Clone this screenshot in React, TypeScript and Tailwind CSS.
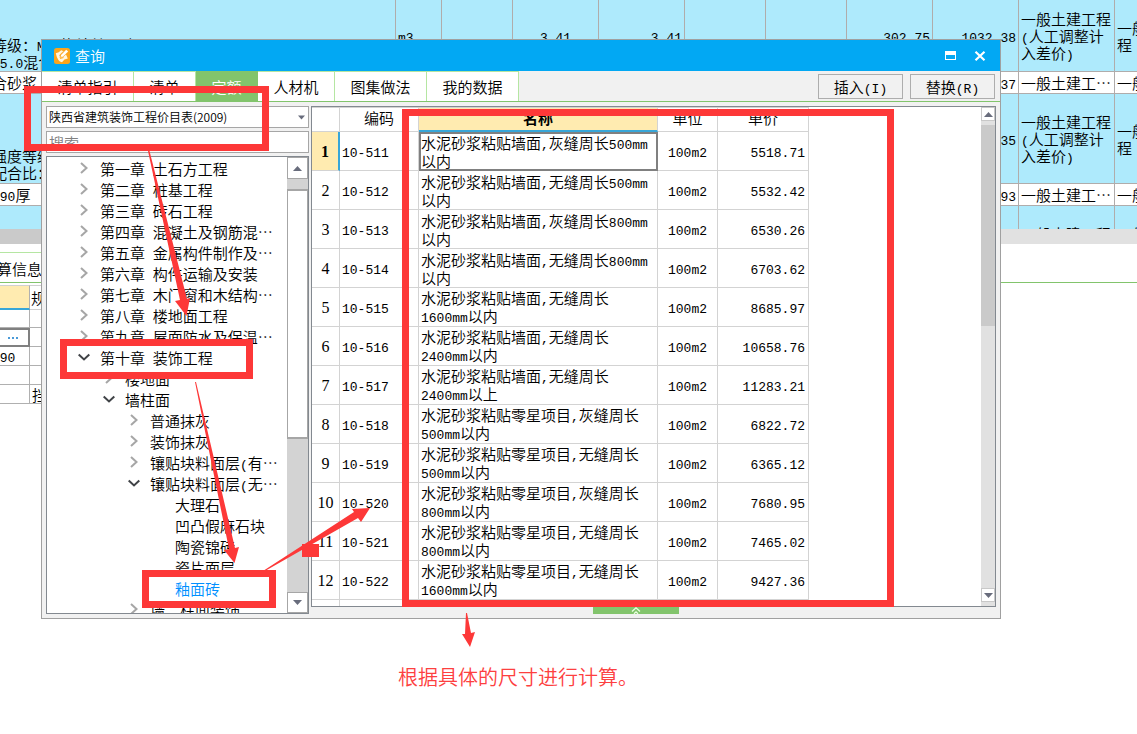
import React from "react";

const RED = "#fd3838";

/* Half-width runs are set in the monospaced face, the rest in the CJK face. */
function Mixed({ children }: { children: string }) {
  return (
    <>
      {children.split(/([\x20-\x7e]+)/).map((part, i) =>
        i % 2 === 1 ? (
          <span key={i} className="whitespace-pre-wrap font-['Liberation_Mono','Noto_Sans_CJK_SC',monospace] text-[13px] leading-none">
            {part}
          </span>
        ) : (
          part
        ),
      )}
    </>
  );
}

type SheetRow = { height: string; tone: string; cells: string[][] };

const sheetRows: SheetRow[] = [
  {
    height: "h-[72px]",
    tone: "bg-[#aeeafc]",
    cells: [["", "", "等级：M10烧结普通砖", "75.0混合砂浆"], ["m3"], [], ["3.41"], ["3.41"], [], [], ["302.75"], ["1032.38"], ["一般土建工程", "(人工调整计", "入差价)"], ["一般土建工", "程"]],
  },
  {
    height: "h-[22px]",
    tone: "bg-white",
    cells: [["合砂浆"], [], [], [], [], [], [], [], ["1032.37"], ["一般土建工…"], ["一般土建工…"]],
  },
  {
    height: "h-[90px]",
    tone: "bg-[#aeeafc]",
    cells: [["", "", "", "强度等级", "配合比："], [], [], [], [], [], [], [], ["1032.35"], ["一般土建工程", "(人工调整计", "入差价)"], ["一般土建工", "程"]],
  },
  {
    height: "h-[22px]",
    tone: "bg-white",
    cells: [["190厚"], [], [], [], [], [], [], [], ["1032.93"], ["一般土建工…"], ["一般土建工…"]],
  },
  {
    height: "h-[70px]",
    tone: "bg-[#aeeafc]",
    cells: [[], [], [], [], [], [], [], [], [], ["一般土建工程"], ["一般土建工", "程"]],
  },
];

const cellAlign = [
  "pl-0",
  "pl-[2px]",
  "",
  "text-center",
  "pr-[2px] text-right",
  "",
  "",
  "pr-[2px] text-right",
  "pr-[2px] text-right",
  "pl-[2px]",
  "pl-[2px]",
];

function Sheet() {
  return (
    <div className="h-[229px] overflow-hidden">
      <table className="-ml-2 w-[1219px] table-fixed border-separate border-spacing-0 text-[15px] leading-[17px]">
        <colgroup>
          <col className="w-[404px]" />
          <col className="w-[46px]" />
          <col className="w-[71px]" />
          <col className="w-[86px]" />
          <col className="w-[86px]" />
          <col className="w-[81px]" />
          <col className="w-[81px]" />
          <col className="w-[86px]" />
          <col className="w-[86px]" />
          <col className="w-[96px]" />
          <col className="w-[96px]" />
        </colgroup>
        <tbody>
          {sheetRows.map((row, r) => (
            <tr key={r} className={`${row.height} ${row.tone}`}>
              {row.cells.map((lines, c) => (
                <td
                  key={c}
                  className={`overflow-hidden border-r border-b border-[#b0acab] p-0 whitespace-nowrap ${r === 4 ? "pt-[19px] align-top" : "align-middle"} ${cellAlign[c]}`}
                >
                  {lines.map((line, i) => (
                    <div key={i} className="h-[17px]">
                      <Mixed>{line}</Mixed>
                    </div>
                  ))}
                </td>
              ))}
            </tr>
          ))}
        </tbody>
      </table>
    </div>
  );
}

function LowerPane() {
  return (
    <div className="-ml-2">
      <div className="flex h-[15px]">
        <div className="w-[500px] bg-[#cacaca]" />
        <div className="flex-1 bg-[#e1e1e1]" />
      </div>
      <div className="flex h-[39px] items-end border-b border-[#82c46c]">
        <div className="flex h-[30px] w-[100px] items-center border-t border-[#b5e6a2] text-[15px] whitespace-nowrap">
          <span className="-ml-[10px] pt-1">换算信息</span>
        </div>
      </div>
      <table className="mt-[2px] w-[140px] table-fixed border-separate border-spacing-0 text-[15px] leading-[17px]">
        <colgroup>
          <col className="w-[38px]" />
          <col className="w-[102px]" />
        </colgroup>
        <thead>
          <tr className="h-[25px]">
            <th className="border-t border-r border-b-2 border-t-[#d0d0d0] border-r-[#b0b0b0] border-b-[#38a6d8] bg-[#ffebb0] p-0" />
            <th className="border-t border-b border-[#d0d0d0] p-0 pl-px text-left font-[350]">规格</th>
          </tr>
        </thead>
        <tbody>
          <tr className="h-[18px]">
            <td className="border-r border-b border-[#b0b0b0] p-0" />
            <td className="border-b border-[#b0b0b0] p-0" />
          </tr>
          <tr className="h-[19px]">
            <td className="border-2 border-[#808080] p-0">
              <button aria-label="选择" className="ml-auto flex h-2 w-[30px] items-center justify-center gap-[2px]">
                <i className="h-[2px] w-[2px] bg-[#4a9ad8]" />
                <i className="h-[2px] w-[2px] bg-[#4a9ad8]" />
                <i className="h-[2px] w-[2px] bg-[#4a9ad8]" />
              </button>
            </td>
            <td className="border-b border-[#b0b0b0] p-0" />
          </tr>
          <tr className="h-[19px]">
            <td className="border-r border-b border-[#b0b0b0] p-0 leading-none">
              <Mixed>190</Mixed>
            </td>
            <td className="border-b border-[#b0b0b0] p-0" />
          </tr>
          <tr className="h-[19px]">
            <td className="border-r border-b border-[#b0b0b0] p-0" />
            <td className="border-b border-[#b0b0b0] p-0" />
          </tr>
          <tr className="h-[19px]">
            <td className="border-r border-b border-[#b0b0b0] p-0" />
            <td className="border-b border-[#b0b0b0] p-0 pl-[2px] leading-[17px]">挡墙</td>
          </tr>
        </tbody>
      </table>
    </div>
  );
}

type Node = { label: string; level: number; state?: "open" | "closed"; selected?: boolean };

const tree: Node[] = [
  { label: "第一章 土石方工程", level: 0, state: "closed" },
  { label: "第二章 桩基工程", level: 0, state: "closed" },
  { label: "第三章 砖石工程", level: 0, state: "closed" },
  { label: "第四章 混凝土及钢筋混…", level: 0, state: "closed" },
  { label: "第五章 金属构件制作及…", level: 0, state: "closed" },
  { label: "第六章 构件运输及安装", level: 0, state: "closed" },
  { label: "第七章 木门窗和木结构…", level: 0, state: "closed" },
  { label: "第八章 楼地面工程", level: 0, state: "closed" },
  { label: "第九章 屋面防水及保温…", level: 0, state: "closed" },
  { label: "第十章 装饰工程", level: 0, state: "open" },
  { label: "楼地面", level: 1, state: "closed" },
  { label: "墙柱面", level: 1, state: "open" },
  { label: "普通抹灰", level: 2, state: "closed" },
  { label: "装饰抹灰", level: 2, state: "closed" },
  { label: "镶贴块料面层(有…", level: 2, state: "closed" },
  { label: "镶贴块料面层(无…", level: 2, state: "open" },
  { label: "大理石", level: 3 },
  { label: "凹凸假麻石块", level: 3 },
  { label: "陶瓷锦砖", level: 3 },
  { label: "瓷片面层", level: 3 },
  { label: "釉面砖", level: 3, selected: true },
  { label: "墙、柱面装饰", level: 2, state: "closed" },
];

const indent = ["pl-[31px]", "pl-[56px]", "pl-[81px]", "pl-[106px]"];

function Chevron({ state }: { state?: "open" | "closed" }) {
  return (
    <svg width="12" height="12" viewBox="0 0 12 12" fill="none" strokeWidth="2" className="mb-[2px] shrink-0">
      {state === "closed" && <path d="M3 1L8.5 6L3 11" stroke="#a6a6a6" />}
      {state === "open" && <path d="M0.7 3.5L6 8.5L11.3 3.5" stroke="#404347" />}
    </svg>
  );
}

function Triangle({ up, small }: { up?: boolean; small?: boolean }) {
  return (
    <svg width={small ? 7 : 9} height="5" viewBox="0 0 9 5" fill="#686c7c">
      <path d={up ? "M0 5L4.5 0L9 5Z" : "M0 0L4.5 5L9 0Z"} />
    </svg>
  );
}

function TreePane() {
  return (
    <div className="flex h-[458px] border border-[#838990] bg-white">
      <ul className="min-w-0 flex-1 overflow-hidden pt-px text-[15px] leading-[21px]">
        {tree.map((n) => (
          <li key={n.label}>
            <button
              className={`flex h-[21px] w-full items-center gap-[10px] text-left whitespace-nowrap ${indent[n.level]} ${n.selected ? "text-[#0090ff]" : "text-black"}`}
            >
              <Chevron state={n.state} />
              <span>
                <Mixed>{n.label}</Mixed>
              </span>
            </button>
          </li>
        ))}
      </ul>
      <div className="flex w-[21px] flex-col bg-[#d3d3d3]">
        <button aria-label="向上滚动" className="flex h-[22px] items-center justify-center border border-[#a6a6a6] bg-white">
          <Triangle up />
        </button>
        <div className="mt-[10px] h-[250px] border border-t-2 border-b-2 border-[#a6a6a6] bg-white" />
        <div className="flex-1" />
        <button aria-label="向下滚动" className="flex h-[21px] items-center justify-center border border-[#a6a6a6] bg-white">
          <Triangle />
        </button>
      </div>
    </div>
  );
}

const items: [string, string, string][] = [
  ["10-511", "水泥砂浆粘贴墙面,灰缝周长500mm以内", "5518.71"],
  ["10-512", "水泥砂浆粘贴墙面,无缝周长500mm以内", "5532.42"],
  ["10-513", "水泥砂浆粘贴墙面,灰缝周长800mm以内", "6530.26"],
  ["10-514", "水泥砂浆粘贴墙面,无缝周长800mm以内", "6703.62"],
  ["10-515", "水泥砂浆粘贴墙面,无缝周长1600mm以内", "8685.97"],
  ["10-516", "水泥砂浆粘贴墙面,无缝周长2400mm以内", "10658.76"],
  ["10-517", "水泥砂浆粘贴墙面,无缝周长2400mm以上", "11283.21"],
  ["10-518", "水泥砂浆粘贴零星项目,灰缝周长500mm以内", "6822.72"],
  ["10-519", "水泥砂浆粘贴零星项目,无缝周长500mm以内", "6365.12"],
  ["10-520", "水泥砂浆粘贴零星项目,灰缝周长800mm以内", "7680.95"],
  ["10-521", "水泥砂浆粘贴零星项目,无缝周长800mm以内", "7465.02"],
  ["10-522", "水泥砂浆粘贴零星项目,无缝周长1600mm以内", "9427.36"],
  ["", "", ""],
];

function PriceTable() {
  return (
    <div className="flex h-[501px] min-w-0 border border-[#838990] bg-white">
      <div className="min-w-0 flex-1 overflow-hidden">
        <table className="w-[497px] table-fixed border-separate border-spacing-0 text-[15px] leading-[17px]">
          <colgroup>
            <col className="w-[28px]" />
            <col className="w-[79px]" />
            <col className="w-[239px]" />
            <col className="w-[60px]" />
            <col className="w-[91px]" />
          </colgroup>
          <thead>
            <tr className="h-[25px]">
              <th className="border-t border-r border-b border-[#d3d3d3] p-0" />
              <th className="border-t border-r border-b border-[#d3d3d3] p-0 pb-1 font-[350]">编码</th>
              <th className="border-t border-r border-b-2 border-[#d3d3d3] border-b-[#38a6d8] bg-[#ffebb0] p-0 pb-1 font-bold">名称</th>
              <th className="border-t border-r border-b border-[#d3d3d3] p-0 pb-1 font-[350]">单位</th>
              <th className="border-t border-r border-b border-[#d3d3d3] p-0 pb-1 font-[350]">单价</th>
            </tr>
          </thead>
          <tbody>
            {items.map(([code, name, price], i) => (
              <tr key={i} className="h-[39px]">
                <th
                  className={`border-b border-[#d3d3d3] p-0 text-center font-['Liberation_Serif',serif] text-[16px] ${i === 0 ? "border-r-2 border-r-[#38a6d8] bg-[#ffebb0] font-bold" : "border-r font-normal"}`}
                >
                  {code && i + 1}
                </th>
                <td className="border-r border-b border-[#d3d3d3] p-0 pl-[2px]">
                  <Mixed>{code}</Mixed>
                </td>
                <td className={i === 0 ? "border-2 border-[#808080] p-0" : "border-r border-b border-[#d3d3d3] p-0 pr-1 pl-[2px]"}>
                  <Mixed>{name}</Mixed>
                </td>
                <td className="border-r border-b border-[#d3d3d3] p-0 text-center">
                  <Mixed>{code && "100m2"}</Mixed>
                </td>
                <td className="border-r border-b border-[#d3d3d3] p-0 pr-[3px] text-right">
                  <Mixed>{price}</Mixed>
                </td>
              </tr>
            ))}
          </tbody>
        </table>
      </div>
      <div className="flex w-[14px] flex-col bg-[#e1e1e1]">
        <button aria-label="向上滚动" className="flex h-[14px] items-center justify-center border border-[#c8c8c8] bg-white">
          <Triangle up />
        </button>
        <div className="mt-1 h-[201px] bg-[#cacaca]" />
        <div className="flex-1" />
        <button aria-label="向下滚动" className="mb-1 flex h-[14px] items-center justify-center border border-[#c8c8c8] bg-white">
          <Triangle />
        </button>
      </div>
    </div>
  );
}

const tabs = [
  { label: "清单指引", width: "w-[92px]" },
  { label: "清单", width: "w-[62px]" },
  { label: "定额", width: "w-[62px]", active: true },
  { label: "人材机", width: "w-[77px]" },
  { label: "图集做法", width: "w-[92px]" },
  { label: "我的数据", width: "w-[92px]" },
];

function Dialog() {
  return (
    <section
      role="dialog"
      aria-label="查询"
      className="absolute top-[39px] right-[136px] left-[41px] border border-[#a0a0a0] bg-[#f1f1f1]"
    >
      <header className="flex h-[31px] items-center bg-[#02a8f3] pr-[14px] pl-3 text-white">
        <svg width="16" height="16" viewBox="0 0 16 16" className="mr-[5px]">
          <rect width="16" height="16" rx="2.5" fill="#fba51c" />
          <path d="M1.8 5.2Q5 4.6 7.2 2.2L9.6 3.2L6 7L5.6 9.8L8.6 9.6L12 6.4L13.8 10.6Q10 11 8 14.2Q3.5 13.5 1.8 5.2Z" fill="#fff6df" />
          <path d="M6.6 8.8L7 7L12.2 1.8L14.2 3.6L8.8 8.8Z" fill="#fff" />
          <path d="M5.2 7.6L8.8 4M6 10.6L9.6 9.6" stroke="#fba51c" strokeWidth="0.8" />
        </svg>
        <h1 className="flex-1 text-[15px] leading-5">查询</h1>
        <button aria-label="最大化" className="mr-[18px] h-[9px] w-[11px] border border-t-4 border-white" />
        <button aria-label="关闭">
          <svg width="12" height="10" viewBox="0 0 12 10" stroke="#fff" strokeWidth="2.2">
            <path d="M1.5 0.8L10.5 9.2M10.5 0.8L1.5 9.2" />
          </svg>
        </button>
      </header>
      <div className="flex h-[31px] border-b border-[#82c46c]">
        <nav className="flex flex-1">
          {tabs.map((t) => (
            <button
              key={t.label}
              className={`border-t border-r pt-px text-center text-[15px] leading-5 whitespace-nowrap ${t.width} ${t.active ? "border-[#82c46c] bg-[#82c46c] text-white" : "border-[#b5e6a2] bg-white"}`}
            >
              {t.label}
            </button>
          ))}
        </nav>
        <div className="flex gap-[7px] pt-[3px] pr-[5px] text-[15px] leading-5">
          <button className="h-[25px] w-[85px] border border-[#adadad]">
            <Mixed>插入(I)</Mixed>
          </button>
          <button className="h-[25px] w-[85px] border border-[#adadad]">
            <Mixed>替换(R)</Mixed>
          </button>
        </div>
      </div>
      <div className="flex gap-[2px] px-1 pt-1">
        <div className="flex w-[263px] flex-col gap-[3px] pb-1">
          <div className="relative">
            <select
              aria-label="价目表"
              className="block h-[22px] w-full appearance-none border border-[#a6a6a6] bg-white pl-[2px] text-[12px] leading-5"
            >
              <option>陕西省建筑装饰工程价目表(2009)</option>
            </select>
            <span className="pointer-events-none absolute inset-y-0 right-1 flex items-center">
              <Triangle small />
            </span>
          </div>
          <input
            aria-label="搜索"
            placeholder="搜索"
            className="block h-[22px] border border-[#a6a6a6] bg-white pl-[2px] text-[15px] leading-5 placeholder:text-[#808080]"
          />
          <TreePane />
        </div>
        <div className="flex min-w-0 flex-1 flex-col">
          <PriceTable />
          <button aria-label="展开" className="ml-[282px] flex h-[7px] w-[86px] items-center justify-center bg-[#82c46c]">
            <svg width="10" height="7" viewBox="0 0 10 7" fill="none" stroke="#e9ffe0" strokeWidth="1.3">
              <path d="M1 4.5L5 0.8L9 4.5M3 6.8L5 4.8L7 6.8" />
            </svg>
          </button>
        </div>
      </div>
    </section>
  );
}

function Annotations() {
  return (
    <div className="pointer-events-none absolute inset-0">
      <div className="absolute top-[86px] left-[24px] h-[65px] w-[245px] border-7 border-[#fd3838]" />
      <div className="absolute top-[339px] left-[60px] h-[40px] w-[193px] border-7 border-[#fd3838]" />
      <div className="absolute top-[570px] left-[142px] h-[38px] w-[134px] border-7 border-[#fd3838]" />
      <div className="absolute top-[109px] left-[402px] h-[498px] w-[492px] border-7 border-[#fd3838]" />
      <div className="absolute top-[544px] left-[302px] h-[13px] w-[17px] bg-[#fd3838]" />
      <svg className="absolute inset-0 h-full w-full" fill={RED}>
        <path d="M148 151L149.5 151L187 299L190 298L186.5 316L175 301L180 300Z" />
        <path d="M195 382L196 382L235 548L239 547L234.5 563L224 550L229 549Z" />
        <path d="M263 571L354 512L352 509L370 508L361 522L358 518L265 571Z" />
        <path d="M466 613L467 613L471 633L475 632L470 647L462 634L465 634Z" />
      </svg>
      <p className="absolute top-[662px] left-[398px] text-[20px] leading-[30px] whitespace-nowrap text-[#fd4040]">根据具体的尺寸进行计算。</p>
    </div>
  );
}

export default function App() {
  return (
    <main className="relative min-h-screen overflow-hidden bg-white font-['Noto_Sans_CJK_SC',sans-serif] font-[350] text-black" lang="zh-CN">
      <Sheet />
      <LowerPane />
      <Dialog />
      <Annotations />
    </main>
  );
}
